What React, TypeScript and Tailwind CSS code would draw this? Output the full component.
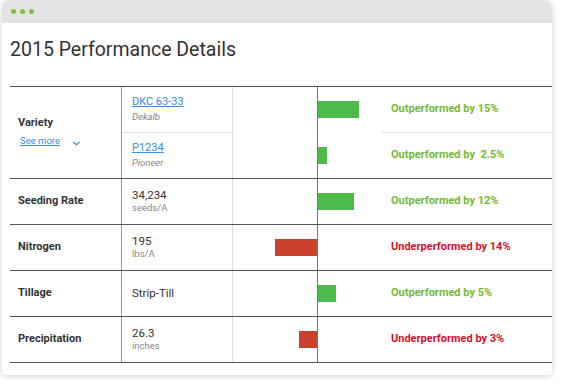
import { ChevronDown } from "lucide-react";

const rows = [
  { label: "Seeding Rate", value: "34,234", unit: "seeds/A", bar: 36, text: "Outperformed by 12%" },
  { label: "Nitrogen", value: "195", unit: "lbs/A", bar: -42, text: "Underperformed by 14%" },
  { label: "Tillage", value: "Strip-Till", unit: "", bar: 18, text: "Outperformed by 5%" },
  { label: "Precipitation", value: "26.3", unit: "inches", bar: -18, text: "Underperformed by 3%" },
];

function Bar({ size }: { size: number }) {
  // axis sits between left half (negative) and right half (positive)
  return (
    <div className="flex h-full w-[149px]">
      <div className="flex w-[84px] items-center justify-end">
        {size < 0 && <div className="h-[17px] bg-[#c9402d]" style={{ width: -size }} />}
      </div>
      <div className="flex flex-1 items-center border-l border-[#777]">
        {size > 0 && <div className="h-[17px] bg-[#4cbb4a]" style={{ width: size }} />}
      </div>
    </div>
  );
}

function Result({ text }: { text: string }) {
  const good = text.startsWith("Out");
  return (
    <div
      className={`flex h-full flex-1 items-center pl-[9px] text-[11px] font-bold ${good ? "text-[#74bb35]" : "text-[#d5112b]"}`}
    >
      {text}
    </div>
  );
}

export default function App() {
  return (
    <div className="h-[389px] w-[569px] bg-white font-['Roboto',sans-serif]">
      <div className="ml-[2px] h-[375px] w-[550px] overflow-hidden rounded-t-lg rounded-b bg-white shadow-[0_1px_6px_rgba(0,0,0,0.18)]">
        <div className="flex h-[23px] items-center gap-[4px] bg-[#e3e4e3] pl-[9px]">
          <span className="h-[5px] w-[5px] rounded-full bg-[#7cc242]" />
          <span className="h-[5px] w-[5px] rounded-full bg-[#7cc242]" />
          <span className="h-[5px] w-[5px] rounded-full bg-[#7cc242]" />
        </div>

        <div className="flex h-[63px] items-start pl-2 pt-[12px]">
          <h1 className="text-[19.5px] text-[#333]">2015 Performance Details</h1>
        </div>

        <div className="ml-2 border-t border-[#555] text-[#333]">
          {/* Variety row with two sub rows */}
          <div className="flex h-[92px] border-b border-[#555]">
            <div className="flex w-[112px] flex-col border-r border-[#999] pl-2 pt-[28px]">
              <div className="text-[11px] font-bold leading-[16px]">Variety</div>
              <div className="mt-[2px] flex items-center leading-[12px]">
                <a className="pl-[2px] text-[9.5px] text-[#3b8de0] underline">See more</a>
                <ChevronDown className="ml-[11px] mt-[5px] h-[11px] w-[11px] text-[#3b8de0]" strokeWidth={3} />
              </div>
            </div>
            <div className="flex flex-1 flex-col">
              {[
                { name: "DKC 63-33", brand: "Dekalb", bar: 41, text: "Outperformed by 15%" },
                { name: "P1234", brand: "Pioneer", bar: 9, text: "Outperformed by\u00a0 2.5%" },
              ].map((v, i) => (
                <div key={v.name} className="flex h-[46px]">
                  <div
                    className={`flex w-[111px] flex-col justify-center border-r border-[#ddd] pl-[10px] ${i === 0 ? "border-b" : ""}`}
                  >
                    <a className="text-[11px] leading-[14px] text-[#3b8de0] underline">{v.name}</a>
                    <span className="mt-px text-[9.5px] italic leading-[14px] text-[#888]">{v.brand}</span>
                  </div>
                  <Bar size={v.bar} />
                  <div className={`flex h-full flex-1 ${i === 0 ? "border-b border-[#ddd]" : ""}`}>
                    <Result text={v.text} />
                  </div>
                </div>
              ))}
            </div>
          </div>

          {rows.map((r) => (
            <div key={r.label} className="flex h-[46px] border-b border-[#555]">
              <div className="flex w-[112px] items-center border-r border-[#999] pl-2 text-[11px] font-bold">
                {r.label}
              </div>
              <div className="flex w-[111px] flex-col justify-center border-r border-[#ddd] pl-[10px]">
                <span className="text-[11.5px] leading-[13px]">{r.value}</span>
                {r.unit && <span className="text-[9.5px] leading-[12px] text-[#888]">{r.unit}</span>}
              </div>
              <Bar size={r.bar} />
              <Result text={r.text} />
            </div>
          ))}
        </div>
      </div>
    </div>
  );
}
